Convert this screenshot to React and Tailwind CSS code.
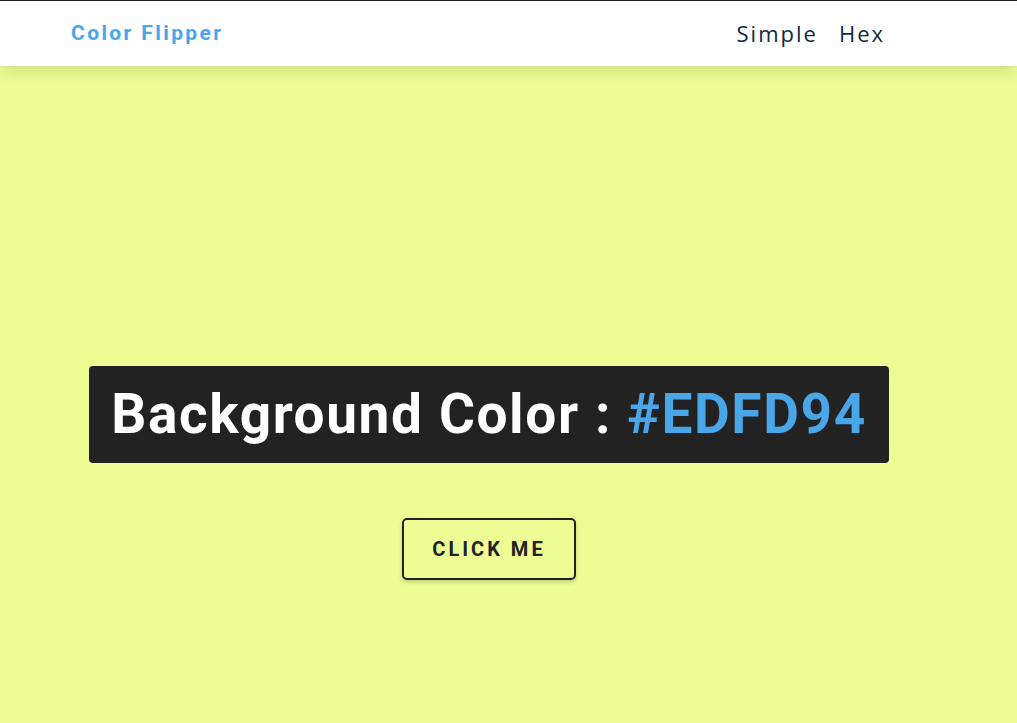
import React, { useState } from "react";

const App = () => {
  const [color, setColor] = useState("#EDFD94");

  const flip = () => {
    const hex = "0123456789ABCDEF";
    let next = "#";
    for (let i = 0; i < 6; i++) next += hex[Math.floor(Math.random() * 16)];
    setColor(next);
  };

  return (
    <div
      className="min-h-screen border-t border-[#222]"
      style={{ backgroundColor: color }}
    >
      {/* Nav */}
      <nav className="relative z-10 h-[65px] bg-white shadow-[0_5px_15px_rgba(0,0,0,0.12)]">
        <div className="flex h-full items-center justify-between pl-[71px] pr-[132px]">
          <h4 className="font-['Roboto',sans-serif] text-[21px] font-bold tracking-[2.4px] text-[#49a6e9]">
            Color Flipper
          </h4>
          <ul className="flex gap-[21px] font-['Open_Sans',sans-serif] text-[22px] tracking-[2px] text-[#102a42]">
            <li>Simple</li>
            <li>Hex</li>
          </ul>
        </div>
      </nav>

      {/* Main */}
      <main className="flex flex-col items-center pt-[300px] pr-[39px]">
        <h2 className="rounded-[4px] bg-[#222] px-[22px] py-[16px] font-['Roboto',sans-serif] text-[55px] font-bold leading-[65px] tracking-[1.6px] text-white">
          Background Color : <span className="text-[#49a6e9]">{color}</span>
        </h2>
        <button
          onClick={flip}
          className="mt-[55px] rounded-[5px] border-2 border-[#222] bg-transparent px-[28px] py-[17px] font-['Roboto',sans-serif] text-[20px] font-bold uppercase leading-[24px] tracking-[3px] text-[#222] shadow-[0_2px_4px_rgba(0,0,0,0.2)]"
        >
          Click me
        </button>
      </main>
    </div>
  );
};

export default App;
